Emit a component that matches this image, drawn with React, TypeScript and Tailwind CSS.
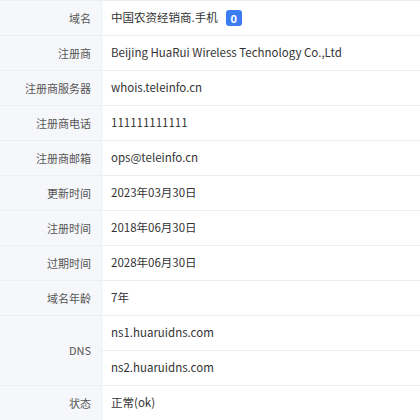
import React from 'react';

type Row = { label: string; values: React.ReactNode[] };

const rows: Row[] = [
  {
    label: '域名',
    values: [
      <span className="flex items-center">
        中国农资经销商.手机
        <span className="ml-2 flex h-4 w-4 items-center justify-center rounded-[3px] bg-[#3d7cf0] text-[11px] font-bold text-white">
          0
        </span>
      </span>,
    ],
  },
  { label: '注册商', values: ['Beijing HuaRui Wireless Technology Co.,Ltd'] },
  { label: '注册商服务器', values: ['whois.teleinfo.cn'] },
  { label: '注册商电话', values: ['111111111111'] },
  { label: '注册商邮箱', values: ['ops@teleinfo.cn'] },
  { label: '更新时间', values: ['2023年03月30日'] },
  { label: '注册时间', values: ['2018年06月30日'] },
  { label: '过期时间', values: ['2028年06月30日'] },
  { label: '域名年龄', values: ['7年'] },
  { label: 'DNS', values: ['ns1.huaruidns.com', 'ns2.huaruidns.com'] },
  { label: '状态', values: ['正常(ok)'] },
];

export default function App() {
  return (
    <div
      className="h-[420px] w-[420px] overflow-hidden bg-white text-[#333]"
      style={{ fontFamily: '"Noto Sans CJK SC", "Noto Sans", sans-serif' }}
    >
      <div className="border-t border-[#ebeef5]">
        {rows.map((row) => (
          <div key={row.label} className="flex border-b border-[#ebeef5]">
            <div className="flex w-[102px] shrink-0 items-center justify-end border-r border-[#ebeef5] bg-[#f5f7fa] pr-[10px] text-[11px] text-[#555]">
              {row.label}
            </div>
            <div className="flex flex-1 flex-col text-[11.5px]">
              {row.values.map((v, i) => (
                <div
                  key={i}
                  className={
                    'flex h-[34px] items-center pl-[9px] ' +
                    (i > 0 ? 'h-[35px] border-t border-[#ebeef5]' : '')
                  }
                >
                  {v}
                </div>
              ))}
            </div>
          </div>
        ))}
        <div className="flex h-[20px]">
          <div className="w-[102px] border-r border-[#ebeef5] bg-[#f5f7fa]" />
        </div>
      </div>
    </div>
  );
}
